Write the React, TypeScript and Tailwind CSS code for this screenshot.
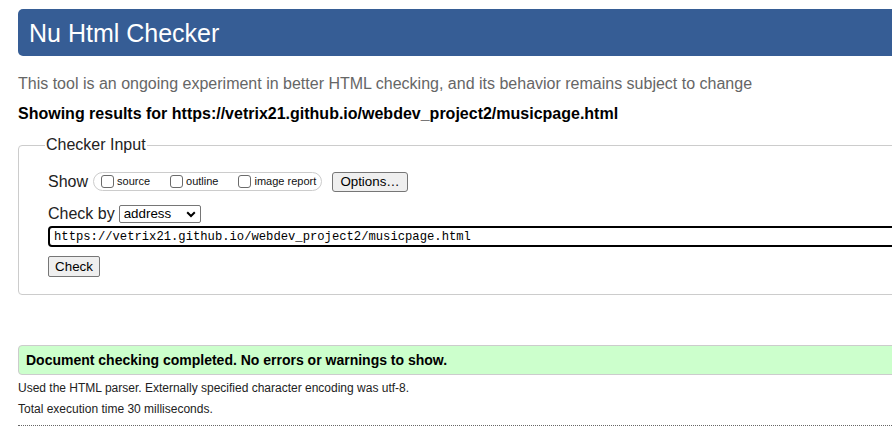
import React from "react";

function Box({ label, className }: { label: string; className?: string }) {
  return (
    <span className={"flex items-center " + (className ?? "")}>
      <span className="block w-[13px] h-[13px] border border-[#6b6b6b] rounded-[3px] bg-white" />
      <span className="ml-[3px] text-[11px] leading-[13px] text-[#111]">{label}</span>
    </span>
  );
}

export default function App() {
  return (
    <div
      className="w-[892px] h-[443px] overflow-hidden bg-white text-[#222]"
      style={{ fontFamily: '"Liberation Sans", Arial, sans-serif' }}
    >
      <div className="w-[1000px] pl-[18px]">
        {/* Header */}
        <div className="mt-[9px] h-[47px] bg-[#365d95] rounded-l-[5px] pl-[11px] flex items-center">
          <h1 className="text-[25px] leading-[30px] text-white font-normal">Nu Html Checker</h1>
        </div>

        <p className="mt-[18px] text-[16px] leading-[20px] text-[#666]">
          This tool is an ongoing experiment in better HTML checking, and its behavior remains subject to change
        </p>
        <p className="mt-[10px] text-[16px] leading-[20px] font-bold text-black">
          Showing results for https://vetrix21.github.io/webdev_project2/musicpage.html
        </p>

        <fieldset className="mt-[12px] border border-[#ccc] rounded-[4px] pl-[29px] pt-[17px] pb-[17px]">
          <legend className="-ml-[3px] px-[1px] text-[16px] leading-[18px] text-[#222]">Checker Input</legend>

          <div className="flex items-center h-[21px]">
            <span className="text-[16px] leading-[20px]">Show</span>
            <div className="ml-[5px] h-[19px] w-[229px] border border-[#ccc] rounded-full flex items-center pl-[7px]">
              <Box label="source" />
              <Box label="outline" className="ml-[20px]" />
              <Box label="image report" className="ml-[20px]" />
            </div>
            <button className="ml-[10px] h-[20px] w-[76px] border border-[#767676] bg-[#efefef] rounded-[3px] text-[13.33px] leading-[16px] text-black">
              Options…
            </button>
          </div>

          <div className="mt-[12px] flex items-center h-[20px]">
            <span className="text-[16px] leading-[20px]">Check by</span>
            <div className="ml-[4px] h-[18px] w-[82px] border border-[#767676] rounded-[2px] bg-white flex items-center justify-between pl-[4px] pr-[4px]">
              <span className="text-[13.33px] leading-[16px] text-black">address</span>
              <svg width="10" height="7" viewBox="0 0 10 7">
                <path d="M1.2 1.3 L5 5 L8.8 1.3" fill="none" stroke="#000" strokeWidth="2" />
              </svg>
            </div>
          </div>

          <div className="mt-[2px] h-[21px] border-2 border-black rounded-[4px] flex items-center pl-[4px] pt-[1px]">
            <span
              className="text-[12.2px] leading-[15px] text-black"
              style={{ fontFamily: '"Liberation Mono", "DejaVu Sans Mono", monospace' }}
            >
              https://vetrix21.github.io/webdev_project2/musicpage.html
            </span>
          </div>

          <button className="mt-[9px] h-[21px] w-[52px] border border-[#767676] bg-[#efefef] rounded-[2px] text-[13.33px] leading-[16px] text-black flex items-center justify-center">
            Check
          </button>
        </fieldset>

        <div className="mt-[50px] h-[30px] border border-[#ccc] rounded-l-[4px] bg-[#ccffcc] flex items-center pl-[7px]">
          <p className="text-[14px] leading-[18px] font-bold text-black">
            Document checking completed. No errors or warnings to show.
          </p>
        </div>

        <p className="mt-[3px] text-[12px] leading-[21px] text-[#222]">
          Used the HTML parser. Externally specified character encoding was utf-8.
        </p>
        <p className="text-[12px] leading-[21px] text-[#222]">Total execution time 30 milliseconds.</p>
        <div className="mt-[5px] border-t border-dotted border-[#666]" />
      </div>
    </div>
  );
}
